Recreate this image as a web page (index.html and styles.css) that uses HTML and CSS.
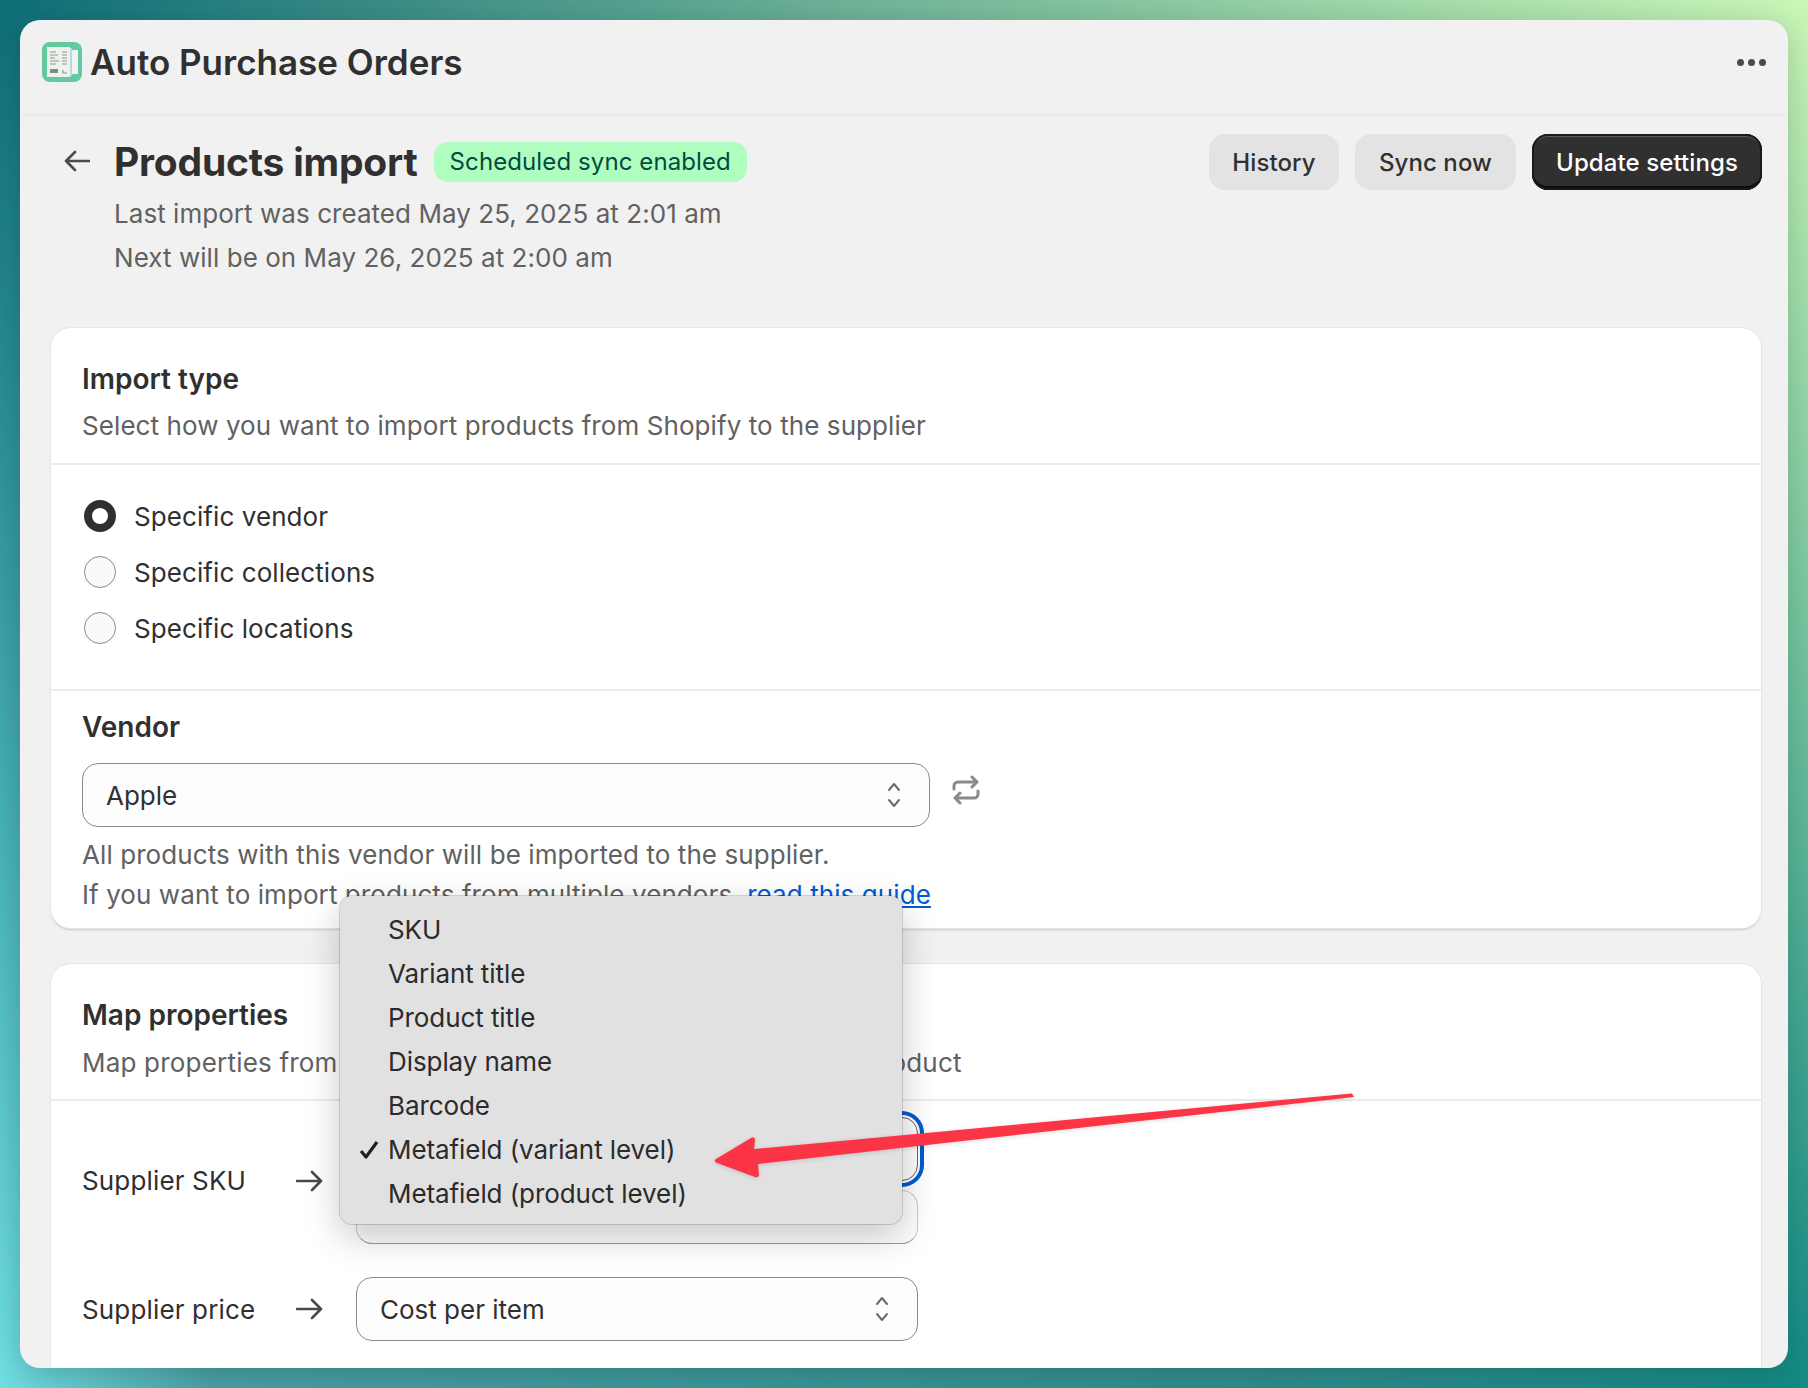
FILE: index.html
```html
<!DOCTYPE html>
<html lang="en">
<head>
<meta charset="utf-8">
<title>Auto Purchase Orders</title>
<link rel="stylesheet" href="styles.css">
</head>
<body>
<div class="window">
  <header class="appbar">
    <div class="brand">
      <svg class="logo" viewBox="0 0 40 40" aria-hidden="true">
        <rect width="40" height="40" rx="8" fill="#63c9a0"/>
        <rect x="28" y="8" width="8" height="24" fill="#f2f4f0"/>
        <rect x="25" y="6" width="5" height="28" fill="#b6d9e2"/>
        <rect x="5" y="5" width="23" height="30" fill="#eef1ec"/>
        <path d="M8 10h6M8 13h8M8 16h5M8 19h9M8 22h6M20 10h5M20 13h5M20 16h5M20 19h5M20 22h5" stroke="#8a9a96" stroke-width="1.2"/>
        <rect x="8" y="27" width="8" height="4" fill="#7b8d8a"/>
        <path d="M21 28v3h4" stroke="#8a9a96" stroke-width="1.2" fill="none"/>
      </svg>
      <span class="app-name">Auto Purchase Orders</span>
    </div>
    <div class="dots"><i></i><i></i><i></i></div>
  </header>

  <main class="page">
    <section class="page-head">
      <svg class="back" viewBox="0 0 26 22" aria-hidden="true"><path d="M25 11H2M11 2l-9 9 9 9" fill="none" stroke="#4a4a4a" stroke-width="2.6" stroke-linecap="round" stroke-linejoin="round"/></svg>
      <div class="head-text">
        <div class="title-row">
          <h1>Products import</h1>
          <span class="badge">Scheduled sync enabled</span>
        </div>
        <p>Last import was created May 25, 2025 at 2:01 am</p>
        <p>Next will be on May 26, 2025 at 2:00 am</p>
      </div>
      <div class="actions">
        <button class="btn btn-history">History</button>
        <button class="btn btn-sync">Sync now</button>
        <button class="btn btn-dark">Update settings</button>
      </div>
    </section>

    <section class="card card-import">
      <div class="card-head">
        <h2>Import type</h2>
        <p class="muted">Select how you want to import products from Shopify to the supplier</p>
      </div>
      <div class="radios">
        <label class="radio"><span class="dot dot-on"></span>Specific vendor</label>
        <label class="radio"><span class="dot"></span>Specific collections</label>
        <label class="radio"><span class="dot"></span>Specific locations</label>
      </div>
      <div class="vendor">
        <h2>Vendor</h2>
        <div class="vendor-row">
          <div class="select select-vendor"><span>Apple</span>
            <svg class="chev" viewBox="0 0 16 30" aria-hidden="true"><path d="M3 10l5-6 5 6M3 20l5 6 5-6" fill="none" stroke="#6b6b6b" stroke-width="2" stroke-linecap="round" stroke-linejoin="round"/></svg>
          </div>
          <svg class="sync-icon" viewBox="0 0 30 30" aria-hidden="true"><path d="M3 14v-3a4 4 0 0 1 4-4h19M21 2l5 5-5 5M27 16v3a4 4 0 0 1-4 4H4M9 18l-5 5 5 5" fill="none" stroke="#8a8a8a" stroke-width="3" stroke-linecap="round" stroke-linejoin="round"/></svg>
        </div>
        <p class="muted help">All products with this vendor will be imported to the supplier.</p>
        <p class="muted help">If you want to import products from multiple vendors, <a href="#">read this guide</a></p>
      </div>
    </section>

    <section class="card card-map">
      <div class="card-head">
        <h2>Map properties</h2>
        <p class="muted map-sub">Map properties from Shopify to the supplier for each imported product</p>
      </div>
      <div class="map-rows">
        <div class="map-row map-row-sku">
          <span class="map-label">Supplier SKU</span>
          <svg class="to" viewBox="0 0 28 22" aria-hidden="true"><path d="M1 11h24M16 2l9 9-9 9" fill="none" stroke="#4a4a4a" stroke-width="2.6" stroke-linecap="round" stroke-linejoin="round"/></svg>
          <div class="field-stack">
            <div class="select select-focus"><span>Metafield (variant level)</span></div>
            <div class="text-input"></div>
          </div>
        </div>
        <div class="map-row">
          <span class="map-label">Supplier price</span>
          <svg class="to" viewBox="0 0 28 22" aria-hidden="true"><path d="M1 11h24M16 2l9 9-9 9" fill="none" stroke="#4a4a4a" stroke-width="2.6" stroke-linecap="round" stroke-linejoin="round"/></svg>
          <div class="select select-map"><span>Cost per item</span>
            <svg class="chev" viewBox="0 0 16 30" aria-hidden="true"><path d="M3 10l5-6 5 6M3 20l5 6 5-6" fill="none" stroke="#6b6b6b" stroke-width="2" stroke-linecap="round" stroke-linejoin="round"/></svg>
          </div>
        </div>
      </div>
    </section>
  </main>

  <ul class="menu">
    <li>SKU</li>
    <li>Variant title</li>
    <li>Product title</li>
    <li>Display name</li>
    <li>Barcode</li>
    <li><svg class="check" viewBox="0 0 20 20" aria-hidden="true"><path d="M2 11l5 6L18 2" fill="none" stroke="#222" stroke-width="3.2" stroke-linejoin="round"/></svg>Metafield (variant level)</li>
    <li>Metafield (product level)</li>
  </ul>
</div>

<svg class="annotation" viewBox="0 0 1808 1388" aria-hidden="true">
  <path d="M1352 1093.5 L1354 1097 L758 1164 L759 1175 Q759 1178 755 1177 L717 1163 Q713 1161 716 1159 L751 1138 Q755 1136 755 1140 L754 1149 Z" fill="#fb3546"/>
</svg>
</body>
</html>
```

FILE: styles.css
```css
* { box-sizing: border-box; }
html, body { margin: 0; height: 100%; }
body {
  height: 1388px;
  padding: 20px;
  overflow: hidden;
  position: relative;
  font-family: Inter, "Liberation Sans", sans-serif;
  color: #303030;
  background: linear-gradient(to right, #0e6e78 0%, #6bb097 45%, #c9f7b6 100%);
}
body::before {
  content: "";
  position: absolute;
  inset: 0;
  background: linear-gradient(to right, #70dfe4 0%, #4a9fa3 12%, #2f8c8c 70%, #128a85 100%);
  -webkit-mask-image: linear-gradient(to bottom, transparent 0%, #000 100%);
  mask-image: linear-gradient(to bottom, transparent 0%, #000 100%);
}
.window {
  position: relative;
  height: 1348px;
  width: 1768px;
  background: #f1f1f1;
  border-radius: 20px;
  overflow: hidden;
  box-shadow: 0 6px 30px rgba(0,0,0,.18);
}
.appbar {
  height: 96px;
  display: flex;
  align-items: center;
  justify-content: space-between;
  padding: 0 22px 10px 22px;
  border-bottom: 2px solid #ebebeb;
}
.brand { display: flex; align-items: center; gap: 8px; }
.logo { width: 40px; height: 40px; display: block; }
.app-name { font-size: 35px; font-weight: 600; }
.dots { display: flex; gap: 4px; }
.dots i { width: 7px; height: 7px; border-radius: 50%; background: #4a4a4a; display: block; }

.page { padding: 18px 27px 0 31px; }
.page-head { display: flex; align-items: flex-start; height: 194px; }
.back { width: 26px; height: 22px; margin: 16px 0 0 13px; flex: none; }
.head-text { margin-left: 24px; flex: 1; }
.title-row { display: flex; align-items: center; gap: 16px; height: 56px; }
h1 { margin: 0 0 2px; font-size: 39px; font-weight: 700; letter-spacing: -0.2px; }
.badge {
  background: #affebf;
  color: #014b40;
  font-size: 24px;
  letter-spacing: .1px;
  font-weight: 400;
  height: 40px;
  line-height: 40px;
  padding: 0 16px;
  border-radius: 14px;
}
.head-text p { margin: 0; font-size: 26px; letter-spacing: .05px; line-height: 44px; color: #616161; }
.head-text p:first-of-type { margin-top: 2px; }
.actions { display: flex; gap: 16px; margin-right: -1px; }
.btn {
  height: 56px;
  border: 0;
  font: inherit;
  font-size: 24px;
  letter-spacing: .1px;
  font-weight: 500;
  border-radius: 16px;
  background: #e3e3e3;
  color: #303030;
}
.btn-history { width: 130px; }
.btn-sync { width: 161px; }
.btn-dark {
  width: 230px;
  background: #303030;
  color: #fff;
  box-shadow: inset 0 0 0 2px #1a1a1a, inset 0 -4px 0 #0c0c0c, inset 0 3px 0 #5a5a5a;
}

.card {
  background: #fff;
  border-radius: 20px;
  box-shadow: 0 0 0 1px #e6e6e6, 0 2px 2px rgba(0,0,0,.16);
}
.card-import { height: 600px; overflow: hidden; }
.card-map { margin-top: 36px; height: 500px; }
.card-head { height: 137px; padding: 31px 31px 0; border-bottom: 2px solid #ebebeb; }
h2 { margin: 0; font-size: 28px; line-height: 40px; font-weight: 600; }
.muted { margin: 0; font-size: 26px; letter-spacing: .08px; color: #616161; line-height: 40px; }
.card-head .muted { margin-top: 7px; }
.card-head .map-sub { margin-top: 8px; letter-spacing: .2px; }

.radios {
  height: 226px;
  padding: 35px 33px 0;
  border-bottom: 2px solid #ebebeb;
  display: flex;
  flex-direction: column;
  gap: 24px;
}
.radio { display: flex; align-items: center; gap: 18px; font-size: 26px; letter-spacing: .08px; height: 32px; }
.dot { width: 32px; height: 32px; border-radius: 50%; border: 1px solid #8a8a8a; background: #fafafa; flex: none; }
.dot-on { border: 8px solid #303030; background: #fff; }

.vendor { padding: 16px 31px 0; }
.vendor-row { display: flex; align-items: flex-start; margin: 16px 0 8px; }
.select {
  height: 64px;
  border: 1px solid #8a8a8a;
  border-radius: 16px;
  background: #fdfdfd;
  display: flex;
  align-items: center;
  justify-content: space-between;
  padding: 0 27px 0 23px;
  font-size: 26px;
}
.select-vendor { width: 848px; }
.chev { width: 16px; height: 30px; }
.sync-icon { width: 30px; height: 30px; margin: 12px 0 0 21px; }
a { color: #005bd3; text-decoration: underline; }

.map-rows { padding: 0 31px; }
.map-row { display: flex; align-items: center; font-size: 26px; }
.map-row-sku { height: 176px; padding-bottom: 17px; }
.map-label { width: 214px; flex: none; letter-spacing: .15px; }
.to { width: 28px; height: 22px; flex: none; }
.map-row .select, .field-stack { margin-left: 32px; width: 562px; flex: none; }
.field-stack { display: flex; flex-direction: column; padding-top: 16px; align-self: flex-start; }
.field-stack .select { margin-left: 0; width: 100%; }
.select-focus { height: 64px; box-shadow: 0 0 0 2px #fff, 0 0 0 6px #005bd3; border-color: #616161; }
.text-input { height: 54px; margin-top: 9px; border: 1px solid #c8c8c8; border-bottom-color: #9a9a9a; border-radius: 16px; background: #fdfdfd; }

.menu {
  position: absolute;
  left: 320px;
  top: 876px;
  width: 562px;
  height: 328px;
  margin: 0;
  padding: 12px 0 0 48px;
  list-style: none;
  background: #e1e1e1;
  border-radius: 12px;
  box-shadow: 0 0 0 1px rgba(0,0,0,.14), 0 12px 36px rgba(0,0,0,.22);
  font-size: 26px;
  letter-spacing: -0.08px;
  color: #2b2b2b;
}
.menu li { height: 44px; line-height: 44px; position: relative; }
.check { position: absolute; left: -29px; top: 12px; width: 20px; height: 20px; }
.annotation { position: absolute; left: 0; top: 0; width: 1808px; height: 1388px; pointer-events: none; filter: drop-shadow(0 1px 2px rgba(0,0,0,.15)); }
```
